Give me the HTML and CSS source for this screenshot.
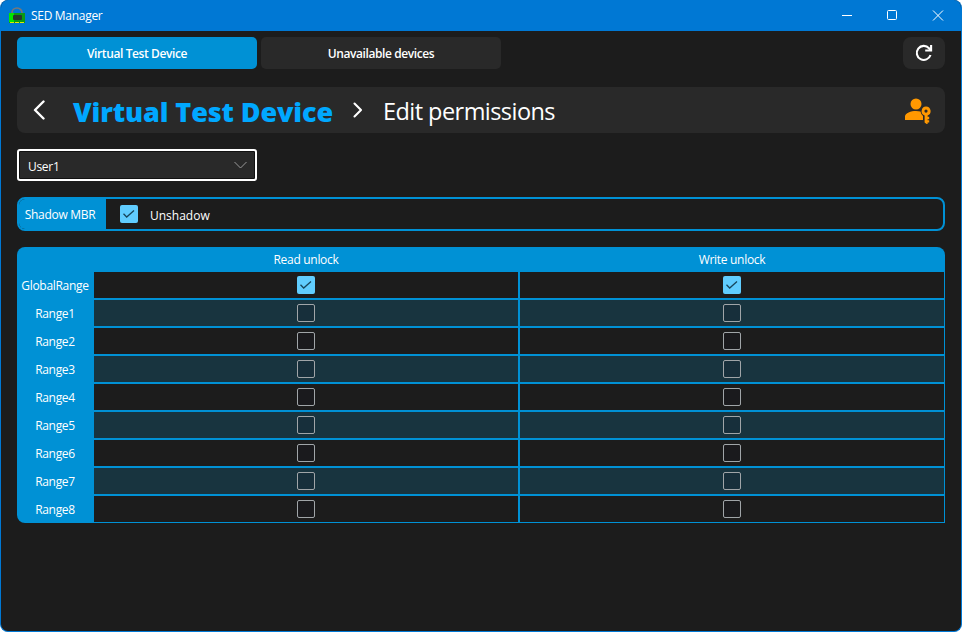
FILE: index.html
```
<!DOCTYPE html>
<html lang="en">
<head>
<meta charset="utf-8">
<title>SED Manager</title>
<link rel="stylesheet" href="styles.css">
</head>
<body>
<div class="window">
  <header class="titlebar">
    <svg class="app-icon" width="16" height="17" viewBox="0 0 16 17">
      <path d="M3 7V5.500a5 4.500 0 0 1 10 0V7" fill="none" stroke="#777" stroke-width="1.700"/>
      <rect x="0" y="6" width="16" height="10" fill="#0b9a14"/>
      <rect x="0" y="6" width="5" height="9" fill="#00e800"/>
      <rect x="4" y="8" width="9" height="5" rx="1" fill="#26382c"/>
      <path d="M1 15.500h14" stroke="#e6e600" stroke-width="1" stroke-dasharray="4 1"/>
    </svg>
    <span class="app-name">SED Manager</span>
    <svg class="controls" width="104" height="12" viewBox="0 0 104 12" fill="none" stroke="#fff">
      <path d="M0 5.500h10"/>
      <rect x="45.500" y=".5" width="9" height="9" rx="1"/>
      <path d="M91 .5l10 10M101 .5l-10 10"/>
    </svg>
  </header>
  <main class="content">
    <nav class="tabs">
      <button class="tab active"><span>Virtual Test Device</span></button>
      <button class="tab"><span>Unavailable devices</span></button>
      <button class="refresh" aria-label="Refresh">
        <svg width="18" height="18" viewBox="0 0 18 18" fill="none" stroke="#fff" stroke-width="2.100">
          <path d="M15.500 11A7 7 0 1 1 14 4.200L15.600 6"/>
          <path d="M10.200 6.500h5.900V1"/>
        </svg>
      </button>
    </nav>
    <section class="crumbs">
      <svg class="back" width="12" height="20" viewBox="0 0 12 20" fill="none" stroke="#fff" stroke-width="2.400" stroke-linecap="round" stroke-linejoin="round"><path d="M10.500 1.500L2 10l8.500 8.500"/></svg>
      <span class="device">Virtual Test Device</span>
      <svg class="next" width="10" height="16" viewBox="0 0 10 16" fill="none" stroke="#fff" stroke-width="2.100" stroke-linecap="round" stroke-linejoin="round"><path d="M1.500 1.500L8 8l-6.500 6.500"/></svg>
      <span class="page">Edit permissions</span>
      <svg class="user-key" width="26" height="26" viewBox="0 0 26 26">
        <g fill="#ff9800">
          <circle cx="11" cy="6" r="5.500"/>
          <path d="M0 22v-3.500C0 15 6 13 11 13c1.600 0 3.200.2 4.500.6a7 7 0 0 0 2.500 4.400V22z"/>
          <path fill-rule="evenodd" d="M21 8.500a4.600 4.600 0 0 1 1.600 8.900v1.400h1.600v2.400h-1.600v1h1.600v2.300h-1.600V26h-1l-2-1.500v-7.100A4.600 4.600 0 0 1 21 8.500zm0 3a1.600 1.600 0 1 0 0 3.200 1.600 1.600 0 0 0 0-3.200z"/>
        </g>
      </svg>
    </section>
    <div class="select">
      <span>User1</span>
      <svg width="13" height="8" viewBox="0 0 13 8" fill="none" stroke="#999"><path d="M.5 1l6 6 6-6"/></svg>
    </div>
    <section class="mbr">
      <div class="mbr-label"><span>Shadow MBR</span></div>
      <label class="mbr-value"><i class="box on"><svg width="18" height="18" viewBox="0 0 18 18"><path d="M3.500 8.800l3.200 3.200L14 5.500"/></svg></i><span>Unshadow</span></label>
    </section>
    <section class="grid">
      <div></div><div class="head"><span>Read unlock</span></div><div class="head"><span>Write unlock</span></div>
      <div class="name"><span>GlobalRange</span></div>
      <div class="cell"><i class="box on"><svg width="18" height="18" viewBox="0 0 18 18"><path d="M3.500 8.800l3.200 3.200L14 5.500"/></svg></i></div>
      <div class="cell"><i class="box on"><svg width="18" height="18" viewBox="0 0 18 18"><path d="M3.500 8.800l3.200 3.200L14 5.500"/></svg></i></div>
      <div class="name"><span>Range1</span></div><div class="cell alt"><i class="box"></i></div><div class="cell alt"><i class="box"></i></div>
      <div class="name"><span>Range2</span></div><div class="cell"><i class="box"></i></div><div class="cell"><i class="box"></i></div>
      <div class="name"><span>Range3</span></div><div class="cell alt"><i class="box"></i></div><div class="cell alt"><i class="box"></i></div>
      <div class="name"><span>Range4</span></div><div class="cell"><i class="box"></i></div><div class="cell"><i class="box"></i></div>
      <div class="name"><span>Range5</span></div><div class="cell alt"><i class="box"></i></div><div class="cell alt"><i class="box"></i></div>
      <div class="name"><span>Range6</span></div><div class="cell"><i class="box"></i></div><div class="cell"><i class="box"></i></div>
      <div class="name"><span>Range7</span></div><div class="cell alt"><i class="box"></i></div><div class="cell alt"><i class="box"></i></div>
      <div class="name"><span>Range8</span></div><div class="cell"><i class="box"></i></div><div class="cell"><i class="box"></i></div>
    </section>
  </main>
</div>
</body>
</html>
```
FILE: styles.css
```
* { box-sizing: border-box; }
html { background: #fff; }
body { margin: 0; font: 12px/16px "Open Sans", "Noto Sans", sans-serif; color: #fff; letter-spacing: -0.3px; white-space: nowrap; }
svg { display: block; flex: none; }
.window { width: 962px; height: 632px; background: #1c1c1c; border: 1px solid #0078d4; border-top: 0; border-radius: 8px; overflow: hidden; }
.titlebar { height: 31px; background: #0078d4; display: flex; align-items: center; padding: 0 15px 0 8px; }
.app-name { margin-left: 6px; }
.controls { margin-left: auto; }
.content { padding: 6px 16px 0; }
.tabs { display: flex; gap: 4px; height: 32px; }
.tab, .refresh { border: 0; border-radius: 5px; background: #292929; color: #fff; font: inherit; padding: 0; }
.tab { width: 240px; font-weight: 600; letter-spacing: -0.4px; padding-top: 2px; }
.tab.active { background: #0091d5; }
.refresh { width: 42px; margin-left: auto; display: flex; align-items: center; justify-content: center; border-radius: 8px; }
.crumbs { margin-top: 18px; height: 46px; border-radius: 8px; background: #292929; display: flex; align-items: center; padding: 0 14px 0 16px; }
.back { margin-right: 28px; }
.device { font-size: 27px; line-height: 36px; font-weight: 800; color: #00a8ff; letter-spacing: -0.12px; width: 260px; padding-top: 4px; }
.next { margin: 0 20px 0 20px; }
.page { font-size: 23.5px; line-height: 32px; letter-spacing: -0.55px; padding-top: 2px; }
.user-key { margin-left: auto; margin-top: 2px; }
.select { margin-top: 16px; width: 240px; height: 32px; border: 2px solid #fff; border-radius: 3px; background: #292929; box-shadow: inset 0 0 0 1px #111; display: flex; align-items: center; justify-content: space-between; padding: 3px 8px 0 9px; }
.select svg { margin-top: -4px; }
.mbr { margin-top: 16px; height: 34px; border: 2px solid #0091d5; border-radius: 8px; display: flex; overflow: hidden; }
.mbr-label { width: 87px; background: #0091d5; display: flex; align-items: center; justify-content: center; padding: 2px 5px 0 0; }
.mbr-value { display: flex; align-items: center; gap: 12px; padding-left: 14px; }
.mbr-value span { padding-top: 3px; letter-spacing: 0; }
.grid { margin-top: 16px; background: #0091d5; border-radius: 8px 8px 0 8px; overflow: hidden; display: grid; grid-template-columns: 75px 1fr 1fr; grid-template-rows: 23px repeat(9, 26px); gap: 2px; padding: 0 1px 1px 0; }
.grid > div { display: flex; align-items: center; justify-content: center; }
.head { padding-top: 2px; }
.name { padding: 2px 0 0 1px; }
.cell { background: #1c1c1c; }
.alt { background: #18343f; }
.box { width: 18px; height: 18px; border: 1px solid #a0a5a8; border-radius: 2px; background: rgba(20, 20, 40, 0.15); flex: none; }
.box.on { border: 0; background: #60cdff; }
.box path { fill: none; stroke: #17465c; stroke-width: 1.3; }
```
